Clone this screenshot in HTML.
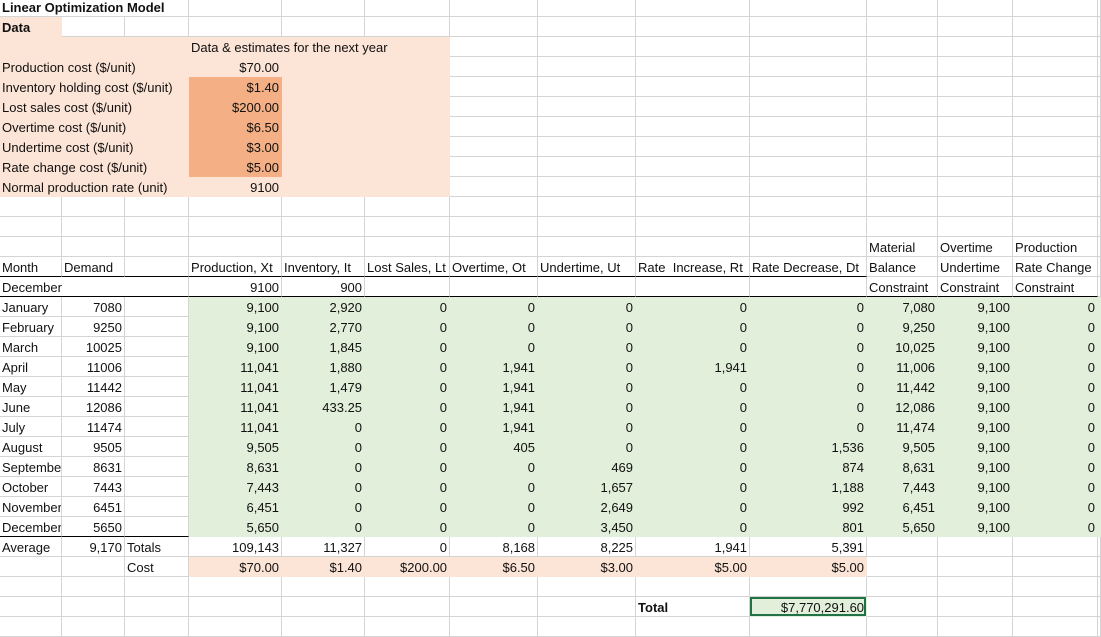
<!DOCTYPE html>
<html><head><meta charset="utf-8">
<style>
html,body{margin:0;padding:0;background:#fff;width:1101px;height:625px;overflow:hidden}
table{position:absolute;left:0;top:-3px;border-collapse:separate;border-spacing:0;table-layout:fixed;width:1101px;font-family:"Liberation Sans",Arial,sans-serif;font-size:13px;color:#111}
td{height:20px;box-sizing:border-box;padding:3px 2px 0 2px;border-right:1px solid #d4d4d4;border-bottom:1px solid #d4d4d4;white-space:nowrap;overflow:hidden;line-height:16px;vertical-align:top}
.r{text-align:right}
.p{background:#fce4d6;border-color:#fce4d6}
.o{background:#f4b084;border-color:#f4b084}
.g{background:#e2efda;border-color:#e2efda}
.bk{border-bottom:1px solid #000}
.b{font-weight:bold}
.tot{background:#e2efda;box-shadow:inset 0 0 0 2px #217346;border-color:#e2efda}
</style></head><body>
<table>
<colgroup><col style="width:62px"><col style="width:63px"><col style="width:64px"><col style="width:93px"><col style="width:83px"><col style="width:85px"><col style="width:88px"><col style="width:98px"><col style="width:114px"><col style="width:117px"><col style="width:71px"><col style="width:75px"><col style="width:85px"><col style="width:3px"></colgroup>
<tr><td colspan="3" class="b">Linear Optimization Model</td><td></td><td></td><td></td><td></td><td></td><td></td><td></td><td></td><td></td><td></td><td></td></tr>
<tr><td class="p b">Data</td><td></td><td></td><td></td><td></td><td></td><td></td><td></td><td></td><td></td><td></td><td></td><td></td><td></td></tr>
<tr><td class="p" colspan="3"></td><td class="p" colspan="3">Data &amp; estimates for the next year</td><td></td><td></td><td></td><td></td><td></td><td></td><td></td><td></td></tr>
<tr><td class="p" colspan="3">Production cost ($/unit)</td><td class="p r">$70.00</td><td class="p"></td><td class="p"></td><td></td><td></td><td></td><td></td><td></td><td></td><td></td><td></td></tr>
<tr><td class="p" colspan="3">Inventory holding cost ($/unit)</td><td class="o r">$1.40</td><td class="p"></td><td class="p"></td><td></td><td></td><td></td><td></td><td></td><td></td><td></td><td></td></tr>
<tr><td class="p" colspan="3">Lost sales cost ($/unit)</td><td class="o r">$200.00</td><td class="p"></td><td class="p"></td><td></td><td></td><td></td><td></td><td></td><td></td><td></td><td></td></tr>
<tr><td class="p" colspan="3">Overtime cost ($/unit)</td><td class="o r">$6.50</td><td class="p"></td><td class="p"></td><td></td><td></td><td></td><td></td><td></td><td></td><td></td><td></td></tr>
<tr><td class="p" colspan="3">Undertime cost ($/unit)</td><td class="o r">$3.00</td><td class="p"></td><td class="p"></td><td></td><td></td><td></td><td></td><td></td><td></td><td></td><td></td></tr>
<tr><td class="p" colspan="3">Rate change cost ($/unit)</td><td class="o r">$5.00</td><td class="p"></td><td class="p"></td><td></td><td></td><td></td><td></td><td></td><td></td><td></td><td></td></tr>
<tr><td class="p" colspan="3">Normal production rate (unit)</td><td class="p r">9100</td><td class="p"></td><td class="p"></td><td></td><td></td><td></td><td></td><td></td><td></td><td></td><td></td></tr>
<tr><td></td><td></td><td></td><td></td><td></td><td></td><td></td><td></td><td></td><td></td><td></td><td></td><td></td><td></td></tr>
<tr><td></td><td></td><td></td><td></td><td></td><td></td><td></td><td></td><td></td><td></td><td></td><td></td><td></td><td></td></tr>
<tr><td></td><td></td><td></td><td></td><td></td><td></td><td></td><td></td><td></td><td></td><td>Material</td><td>Overtime</td><td>Production</td><td></td></tr>
<tr><td class="bk">Month</td><td class="bk">Demand</td><td class="bk"></td><td class="bk">Production, Xt</td><td class="bk">Inventory, It</td><td class="bk">Lost Sales, Lt</td><td class="bk">Overtime, Ot</td><td class="bk">Undertime, Ut</td><td class="bk">Rate&nbsp; Increase, Rt</td><td class="bk">Rate Decrease, Dt</td><td>Balance</td><td>Undertime</td><td>Rate Change</td><td></td></tr>
<tr><td class="bk" colspan="3">December</td><td class="bk r">9100</td><td class="bk r">900</td><td class="bk"></td><td class="bk"></td><td class="bk"></td><td class="bk"></td><td class="bk"></td><td class="bk">Constraint</td><td class="bk">Constraint</td><td class="bk">Constraint</td><td></td></tr>
<tr><td>January</td><td class="r">7080</td><td></td><td class="g r">9,100</td><td class="g r">2,920</td><td class="g r">0</td><td class="g r">0</td><td class="g r">0</td><td class="g r">0</td><td class="g r">0</td><td class="g r">7,080</td><td class="g r">9,100</td><td class="g r">0</td><td class="g"></td></tr>
<tr><td>February</td><td class="r">9250</td><td></td><td class="g r">9,100</td><td class="g r">2,770</td><td class="g r">0</td><td class="g r">0</td><td class="g r">0</td><td class="g r">0</td><td class="g r">0</td><td class="g r">9,250</td><td class="g r">9,100</td><td class="g r">0</td><td class="g"></td></tr>
<tr><td>March</td><td class="r">10025</td><td></td><td class="g r">9,100</td><td class="g r">1,845</td><td class="g r">0</td><td class="g r">0</td><td class="g r">0</td><td class="g r">0</td><td class="g r">0</td><td class="g r">10,025</td><td class="g r">9,100</td><td class="g r">0</td><td class="g"></td></tr>
<tr><td>April</td><td class="r">11006</td><td></td><td class="g r">11,041</td><td class="g r">1,880</td><td class="g r">0</td><td class="g r">1,941</td><td class="g r">0</td><td class="g r">1,941</td><td class="g r">0</td><td class="g r">11,006</td><td class="g r">9,100</td><td class="g r">0</td><td class="g"></td></tr>
<tr><td>May</td><td class="r">11442</td><td></td><td class="g r">11,041</td><td class="g r">1,479</td><td class="g r">0</td><td class="g r">1,941</td><td class="g r">0</td><td class="g r">0</td><td class="g r">0</td><td class="g r">11,442</td><td class="g r">9,100</td><td class="g r">0</td><td class="g"></td></tr>
<tr><td>June</td><td class="r">12086</td><td></td><td class="g r">11,041</td><td class="g r">433.25</td><td class="g r">0</td><td class="g r">1,941</td><td class="g r">0</td><td class="g r">0</td><td class="g r">0</td><td class="g r">12,086</td><td class="g r">9,100</td><td class="g r">0</td><td class="g"></td></tr>
<tr><td>July</td><td class="r">11474</td><td></td><td class="g r">11,041</td><td class="g r">0</td><td class="g r">0</td><td class="g r">1,941</td><td class="g r">0</td><td class="g r">0</td><td class="g r">0</td><td class="g r">11,474</td><td class="g r">9,100</td><td class="g r">0</td><td class="g"></td></tr>
<tr><td>August</td><td class="r">9505</td><td></td><td class="g r">9,505</td><td class="g r">0</td><td class="g r">0</td><td class="g r">405</td><td class="g r">0</td><td class="g r">0</td><td class="g r">1,536</td><td class="g r">9,505</td><td class="g r">9,100</td><td class="g r">0</td><td class="g"></td></tr>
<tr><td>Septembe</td><td class="r">8631</td><td></td><td class="g r">8,631</td><td class="g r">0</td><td class="g r">0</td><td class="g r">0</td><td class="g r">469</td><td class="g r">0</td><td class="g r">874</td><td class="g r">8,631</td><td class="g r">9,100</td><td class="g r">0</td><td class="g"></td></tr>
<tr><td>October</td><td class="r">7443</td><td></td><td class="g r">7,443</td><td class="g r">0</td><td class="g r">0</td><td class="g r">0</td><td class="g r">1,657</td><td class="g r">0</td><td class="g r">1,188</td><td class="g r">7,443</td><td class="g r">9,100</td><td class="g r">0</td><td class="g"></td></tr>
<tr><td>November</td><td class="r">6451</td><td></td><td class="g r">6,451</td><td class="g r">0</td><td class="g r">0</td><td class="g r">0</td><td class="g r">2,649</td><td class="g r">0</td><td class="g r">992</td><td class="g r">6,451</td><td class="g r">9,100</td><td class="g r">0</td><td class="g"></td></tr>
<tr><td class="bk">December</td><td class="bk r">5650</td><td class="bk"></td><td class="g r">5,650</td><td class="g r">0</td><td class="g r">0</td><td class="g r">0</td><td class="g r">3,450</td><td class="g r">0</td><td class="g r">801</td><td class="g r">5,650</td><td class="g r">9,100</td><td class="g r">0</td><td class="g"></td></tr>
<tr><td>Average</td><td class="r">9,170</td><td>Totals</td><td class="r">109,143</td><td class="r">11,327</td><td class="r">0</td><td class="r">8,168</td><td class="r">8,225</td><td class="r">1,941</td><td class="r">5,391</td><td></td><td></td><td></td><td></td></tr>
<tr><td></td><td></td><td>Cost</td><td class="p r">$70.00</td><td class="p r">$1.40</td><td class="p r">$200.00</td><td class="p r">$6.50</td><td class="p r">$3.00</td><td class="p r">$5.00</td><td class="p r">$5.00</td><td></td><td></td><td></td><td></td></tr>
<tr><td></td><td></td><td></td><td></td><td></td><td></td><td></td><td></td><td></td><td></td><td></td><td></td><td></td><td></td></tr>
<tr><td></td><td></td><td></td><td></td><td></td><td></td><td></td><td></td><td class="b">Total</td><td class="tot r">$7,770,291.60</td><td></td><td></td><td></td><td></td></tr>
<tr><td></td><td></td><td></td><td></td><td></td><td></td><td></td><td></td><td></td><td></td><td></td><td></td><td></td><td></td></tr>
</table>
</body></html>
